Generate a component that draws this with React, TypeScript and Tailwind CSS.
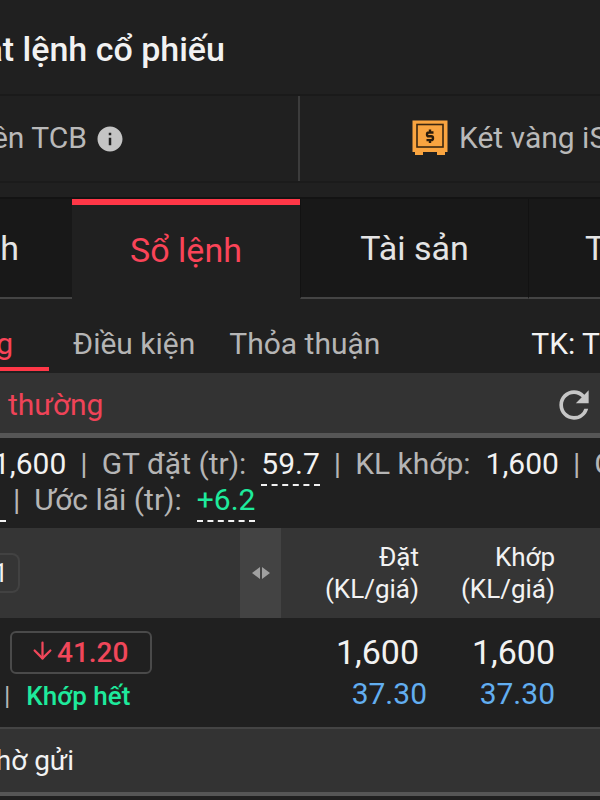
import React, { useState } from 'react';
import { MdInfo, MdRefresh } from 'react-icons/md';
import { ArrowDown } from 'lucide-react';

const mainTabs = [
    { id: 'order', label: 'h', className: 'w-[72px] shrink-0 pr-[53px] justify-end' },
    { id: 'book', label: 'Sổ lệnh', className: 'w-[228px] shrink-0 justify-center' },
    { id: 'assets', label: 'Tài sản', className: 'w-[228px] shrink-0 justify-center border-l' },
    { id: 'more', label: 'T', className: 'flex-1 pl-14 justify-start border-l' },
];

const subTabs = [
    { id: 'normal', label: 'g', className: 'w-[49px] justify-end pr-9' },
    { id: 'condition', label: 'Điều kiện', className: 'ml-6' },
    { id: 'deal', label: 'Thỏa thuận', className: 'ml-[34px]' },
];

const SafeIcon: React.FC = () => (
    <svg width="36" height="36" viewBox="0 0 36 36" aria-hidden="true">
        <path d="M0.500 0.500h35v31.500h-2.500v3h-8v-3H11v3H3v-3H0.500z" fill="#f9a440" />
        <rect x="5" y="4.500" width="26" height="22.500" fill="none" stroke="#3a2610" strokeWidth="1.6" />
        <path d="M21.500 12.500h-4.700q-1.800 0-1.800 1.900t1.800 1.900h2.400q1.800 0 1.800 1.900t-1.800 1.900H14.500M18 9.500v3M18 20v3" fill="none" stroke="#2b1c0c" strokeWidth="2.400" />
    </svg>
);

const Separator: React.FC = () => <span className="text-[#b5b5b5]">|</span>;

const OrderBook: React.FC = () => {
    const [tab, setTab] = useState('book');
    const [subTab, setSubTab] = useState('normal');

    return (
        <main className="min-h-screen overflow-hidden bg-[#202020] font-['Roboto',sans-serif] text-[#f2f2f2]">
            {/* Title */}
            <header className="flex h-24 items-center border-b-2 border-[#1a1a1a] pt-1">
                <h1 className="flex w-[225px] justify-end whitespace-nowrap text-[34px] font-medium leading-10">ặt lệnh cổ phiếu</h1>
            </header>

            {/* Banking shortcuts */}
            <section className="grid h-[87px] grid-cols-2 border-b-2 border-[#1b1b1b] text-[30px] leading-9 text-[#b9b9b9]">
                <div className="flex items-center border-r-2 border-[#3c3c3c] pb-0.5">
                    <span className="flex w-[87px] shrink-0 justify-end whitespace-nowrap">ên TCB</span>
                    <button aria-label="Info" className="ml-2 pt-0.5 text-[#c4c4c4]">
                        <MdInfo size={30} />
                    </button>
                </div>
                <div className="flex items-center gap-[11px] overflow-hidden whitespace-nowrap pb-0.5 pl-28">
                    <span className="shrink-0"><SafeIcon /></span>
                    <span>Két vàng iS</span>
                </div>
            </section>

            {/* Main tabs */}
            <nav className="mt-[14px] flex h-[102px] border-t-2 border-[#131313]">
                {mainTabs.map(item => (
                    <button
                        key={item.id}
                        onClick={() => setTab(item.id)}
                        className={`flex items-center overflow-hidden whitespace-nowrap text-[34px] leading-10 ${item.className} ${tab === item.id ? 'border-t-6 border-[#ff3747] pb-1 text-[#fa4458]' : 'border-b-2 border-b-[#444444] border-l-[#121212] bg-[#181818] text-[#e4e4e4]'}`}
                    >
                        {item.label}
                    </button>
                ))}
            </nav>

            {/* Order type tabs */}
            <nav className="flex h-[74px] items-start overflow-hidden whitespace-nowrap pt-[25px] text-[30px] leading-10">
                {subTabs.map(item => (
                    <button
                        key={item.id}
                        onClick={() => setSubTab(item.id)}
                        className={`flex h-[47px] shrink-0 items-start border-b-4 ${item.className} ${subTab === item.id ? 'border-[#ff3747] text-[#fa4458]' : 'border-transparent text-[#b5b5b5]'}`}
                    >
                        {item.label}
                    </button>
                ))}
                <button className="ml-auto shrink-0">TK: T</button>
            </nav>

            <section className="flex h-[65px] items-center justify-between border-b-5 border-[#565656] bg-[#333333] pl-2 pr-1 pt-1 text-[30px] leading-9">
                <h2 className="text-[#ef4358]">thường</h2>
                <button aria-label="Refresh" className="text-[#c6c6c6]">
                    <MdRefresh size={44} />
                </button>
            </section>

            {/* Totals */}
            <section className="h-[90px] overflow-hidden whitespace-nowrap pt-2 text-[30px] leading-9 text-[#b5b5b5]">
                <p className="-ml-[7px] flex">
                    <span className="text-[#f2f2f2]">1,600</span>
                    <span className="mx-[14px]"><Separator /></span>
                    <span>GT đặt (tr):</span>
                    <span className="ml-[15px] h-10 border-b-2 border-dashed text-[#f2f2f2]">59.7</span>
                    <span className="mx-[14px]"><Separator /></span>
                    <span>KL khớp:</span>
                    <span className="ml-[15px] text-[#f2f2f2]">1,600</span>
                    <span className="mx-[14px]"><Separator /></span>
                    <span>G</span>
                </p>
                <p className="-mt-1 flex">
                    <span className="h-10 w-[6px] border-b-2 border-[#f2f2f2]" />
                    <span className="ml-[7px] mr-[14px]"><Separator /></span>
                    <span>Ước lãi (tr):</span>
                    <span className="ml-[15px] h-10 border-b-2 border-dashed border-[#f2f2f2] text-[#1eea9c]">+6.2</span>
                </p>
            </section>

            {/* Orders */}
            <table className="w-full table-fixed border-collapse whitespace-nowrap">
                <colgroup>
                    <col className="w-[240px]" />
                    <col className="w-[41px]" />
                    <col className="w-[146px]" />
                    <col className="w-[136px]" />
                    <col />
                </colgroup>
                <thead>
                    <tr className="h-[90px] bg-[#353535] text-[26px] leading-8">
                        <th className="text-left font-normal">
                            <span className="flex h-10 w-5 items-center justify-end rounded-r-lg border-2 border-l-0 border-[#424242] pr-[10px]">1</span>
                        </th>
                        <th className="bg-[#434343]">
                            <button aria-label="Resize" className="flex w-full justify-center">
                                <svg width="18" height="14" viewBox="0 0 18 14" fill="#a0a0a0">
                                    <path d="M8 1v12L0 7zM10 1v12l8-6z" />
                                </svg>
                            </button>
                        </th>
                        <th className="pr-2 text-right font-normal">Đặt<br />(KL/giá)</th>
                        <th className="pr-2 text-right font-normal">Khớp<br />(KL/giá)</th>
                        <th />
                    </tr>
                </thead>
                <tbody>
                    <tr className="h-[110px]">
                        <td colSpan={2}>
                            <button className="ml-[10px] flex h-[43px] w-[142px] items-center gap-px rounded-md border-2 border-[#4a4a4a] pl-[17px] text-[28px] font-medium leading-8 text-[#f0475a]">
                                <span className="pb-1"><ArrowDown size={27} strokeWidth={2} /></span>
                                <span>41.20</span>
                            </button>
                            <p className="flex gap-4 pl-1 pt-1 text-[26px] leading-9">
                                <Separator />
                                <span className="font-medium text-[#1eea9c]">Khớp hết</span>
                            </p>
                        </td>
                        <td className="text-right">
                            <p className="pr-2 text-[34px] leading-[42px]">1,600</p>
                            <p className="text-[30px] leading-[42px] text-[#62aef0]">37.30</p>
                        </td>
                        <td className="pr-2 text-right">
                            <p className="text-[34px] leading-[42px]">1,600</p>
                            <p className="text-[30px] leading-[42px] text-[#62aef0]">37.30</p>
                        </td>
                        <td />
                    </tr>
                    <tr className="h-[66px] border-b-4 border-t-2 border-b-[#565656] border-t-[#444444] bg-[#333333]">
                        <td colSpan={5} className="text-[28px] leading-9">
                            <span className="flex w-[74px] justify-end">hờ gửi</span>
                        </td>
                    </tr>
                </tbody>
            </table>
        </main>
    );
};

export default OrderBook;
